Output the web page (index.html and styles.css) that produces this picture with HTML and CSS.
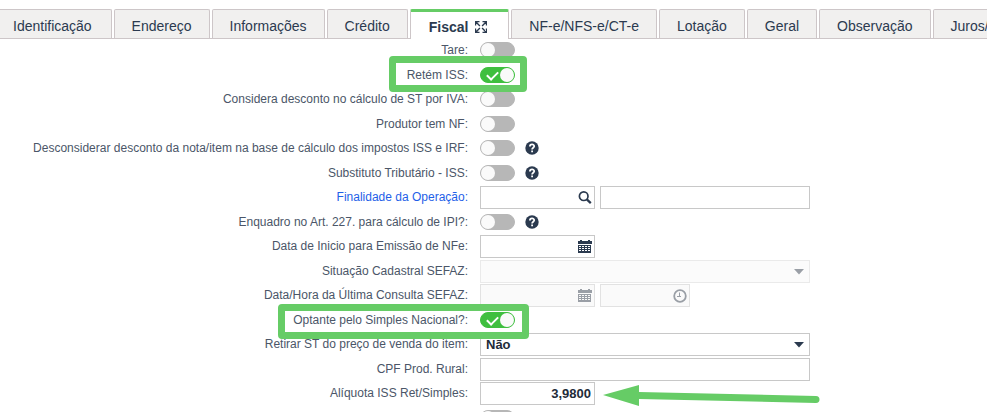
FILE: index.html
```html
<!DOCTYPE html>
<html lang="pt-BR">
<head>
    <meta charset="UTF-8">
    <meta name="viewport" content="width=device-width, initial-scale=1.0">
    <title>Cadastro - Fiscal</title>
    <link rel="stylesheet" href="styles.css">
</head>
<body>
    <svg class="defs" aria-hidden="true">
        <symbol id="lupa" viewBox="0 0 14 14">
            <circle cx="5.7" cy="5.2" r="4.3" fill="none" stroke="currentColor" stroke-width="1.7"/>
            <path d="M8.8 8.4L12.8 12.2" stroke="currentColor" stroke-width="2.3"/>
        </symbol>
        <symbol id="calendario" viewBox="0 0 14 14">
            <path fill="currentColor" fill-rule="evenodd" d="M2 0h2v1h6V0h2v1h2v3H0V1h2zM0 5h13v8H0zM1 6v1h2V6zm3 0v1h2V6zm3 0v1h2V6zm3 0v1h2V6zM1 8v1h2V8zm3 0v1h2V8zm3 0v1h2V8zm3 0v1h2V8zM1 10v1h2v-1zm3 0v1h2v-1zm3 0v1h2v-1zm3 0v1h2v-1z"/>
        </symbol>
        <symbol id="relogio" viewBox="0 0 14 14">
            <circle cx="7" cy="7" r="5.8" fill="none" stroke="currentColor" stroke-width="1.8"/>
            <path d="M6.5 3.5V7.5M4 7.5H8" fill="none" stroke="currentColor" stroke-width="1"/>
        </symbol>
        <symbol id="ajuda" viewBox="0 0 14 14">
            <circle cx="7" cy="7" r="6.7" fill="currentColor"/>
            <path d="M4.9 5.5C4.9 2.8 9.2 2.8 9.2 5.3C9.2 6.7 7.1 6.8 7.1 8.5" fill="none" stroke="#fff" stroke-width="1.8"/>
            <path d="M6.2 9.5h1.8v1.7H6.2z" fill="#fff"/>
        </symbol>
        <symbol id="seta" viewBox="0 0 10 6">
            <path d="M0 0h10L5 5.5z" fill="currentColor"/>
        </symbol>
        <symbol id="expandir" viewBox="0 0 12 12">
            <path d="M4.5 .5h-4v4M7.5 .5h4v4M4.5 11.5h-4v-4M7.5 11.5h4v-4M1 1l3.9 3.9M11 1L7.1 4.9M1 11l3.9-3.9M11 11L7.1 7.1" fill="none" stroke="currentColor" stroke-width="1.4"/>
        </symbol>
    </svg>

    <nav class="abas">
        <button class="aba primeira">Identificação</button>
        <button class="aba">Endereço</button>
        <button class="aba">Informações</button>
        <button class="aba">Crédito</button>
        <button class="aba ativa">Fiscal <svg class="expandir"><use href="#expandir"/></svg></button>
        <button class="aba">NF-e/NFS-e/CT-e</button>
        <button class="aba">Lotação</button>
        <button class="aba">Geral</button>
        <button class="aba">Observação</button>
        <button class="aba">Juros/</button>
    </nav>

    <form class="formulario">
        <div class="linha">
            <label for="tare">Tare:</label>
            <input type="checkbox" class="chave" id="tare">
        </div>
        <div class="linha">
            <label for="retemIss">Retém ISS:</label>
            <input type="checkbox" class="chave" id="retemIss" checked>
            <span class="destaque destaque-iss"></span>
        </div>
        <div class="linha">
            <label for="descontoSt">Considera desconto no cálculo de ST por IVA:</label>
            <input type="checkbox" class="chave" id="descontoSt">
        </div>
        <div class="linha">
            <label for="produtorNf">Produtor tem NF:</label>
            <input type="checkbox" class="chave" id="produtorNf">
        </div>
        <div class="linha">
            <label for="desconsiderar">Desconsiderar desconto da nota/item na base de cálculo dos impostos ISS e IRF:</label>
            <input type="checkbox" class="chave" id="desconsiderar">
            <svg class="ajuda"><use href="#ajuda"/></svg>
        </div>
        <div class="linha">
            <label for="substituto">Substituto Tributário - ISS:</label>
            <input type="checkbox" class="chave" id="substituto">
            <svg class="ajuda"><use href="#ajuda"/></svg>
        </div>
        <div class="linha">
            <label for="finalidade" class="link">Finalidade da Operação:</label>
            <span class="campo medio">
                <input type="text" id="finalidade">
                <svg class="icone"><use href="#lupa"/></svg>
            </span>
            <span class="campo descricao"><input type="text" aria-label="Descrição da finalidade"></span>
        </div>
        <div class="linha">
            <label for="art227">Enquadro no Art. 227. para cálculo de IPI?:</label>
            <input type="checkbox" class="chave" id="art227">
            <svg class="ajuda"><use href="#ajuda"/></svg>
        </div>
        <div class="linha">
            <label for="inicioNfe">Data de Inicio para Emissão de NFe:</label>
            <span class="campo medio">
                <input type="text" id="inicioNfe">
                <svg class="icone"><use href="#calendario"/></svg>
            </span>
        </div>
        <div class="linha">
            <label for="situacao">Situação Cadastral SEFAZ:</label>
            <span class="campo largo">
                <select id="situacao" disabled><option></option></select>
                <svg class="seta"><use href="#seta"/></svg>
            </span>
        </div>
        <div class="linha">
            <label for="consulta">Data/Hora da Última Consulta SEFAZ:</label>
            <span class="campo medio">
                <input type="text" id="consulta" disabled>
                <svg class="icone"><use href="#calendario"/></svg>
            </span>
            <span class="campo hora">
                <input type="text" aria-label="Hora da consulta" disabled>
                <svg class="icone"><use href="#relogio"/></svg>
            </span>
        </div>
        <div class="linha">
            <label for="simples">Optante pelo Simples Nacional?:</label>
            <input type="checkbox" class="chave" id="simples" checked>
            <span class="destaque destaque-simples"></span>
        </div>
        <div class="linha">
            <label for="retirarSt">Retirar ST do preço de venda do item:</label>
            <span class="campo largo">
                <select id="retirarSt"><option>Não</option><option>Sim</option></select>
                <svg class="seta"><use href="#seta"/></svg>
            </span>
        </div>
        <div class="linha">
            <label for="cpfRural">CPF Prod. Rural:</label>
            <span class="campo largo"><input type="text" id="cpfRural"></span>
        </div>
        <div class="linha">
            <label for="aliquota">Alíquota ISS Ret/Simples:</label>
            <span class="campo medio"><input type="text" class="numero" id="aliquota" value="3,9800"></span>
            <svg class="flecha" viewBox="0 0 217 22">
                <path d="M0 10L36 0V7L213 11A3 3 0 0 1 213 18L36 14V21Z" fill="#66cc66"/>
            </svg>
        </div>
        <div class="linha">
            <label></label>
            <input type="checkbox" class="chave" aria-label="Outra opção">
        </div>
    </form>
</body>
</html>
```
FILE: styles.css
```css
* {box-sizing: border-box;}
body {
    margin: 0;
    height: 100vh;
    overflow: hidden;
    background: #fff;
    color: #2b3a4f;
    font-family: "Liberation Sans", Arial, sans-serif;
    font-size: 12px;
}
.defs {display: none;}

/* abas */
.abas {
    display: flex;
    gap: 2px;
    height: 39px;
    padding-top: 9px;
    margin-left: -5px;
    border-bottom: 1px solid #cdc6c8;
    white-space: nowrap;
}
.aba {
    flex: none;
    height: 29px;
    padding: 4px 17px 0;
    border: 1px solid #cdc6c8;
    border-bottom: 0;
    border-radius: 2px 2px 0 0;
    background: #f1f0ef;
    color: #2b3a4f;
    font-family: inherit;
    font-size: 14px;
    line-height: 20px;
}
.aba.primeira {padding-right: 19px;}
.aba.ativa {
    height: 30px;
    padding: 2px 21px 0 18px;
    border-top: 3px solid #66cc66;
    background: #fff;
    font-weight: bold;
}
.expandir {
    width: 12px;
    height: 12px;
    margin-left: 3px;
    vertical-align: -1px;
}

/* formulario */
.linha {
    position: relative;
    display: flex;
    align-items: flex-start;
    height: 24px;
}
.linha:nth-child(odd) {height: 25px;}
.linha label {
    flex: none;
    width: 468px;
    margin-right: 12px;
    color: #4b5668;
    line-height: 22px;
    text-align: right;
    white-space: nowrap;
}
.linha label.link {color: #1f5fe8;}

.chave {
    appearance: none;
    position: relative;
    width: 35px;
    height: 16px;
    margin: 3px 0 0;
    border: 1px solid #b7b7b7;
    border-radius: 8px;
    background: #b7b7b7;
}
.chave::before {
    content: "";
    position: absolute;
    top: 0;
    left: 0;
    width: 14px;
    height: 14px;
    border-radius: 50%;
    background: #fafafa;
}
.chave:checked {
    border-color: #3fbf3f;
    background: #3fbf3f;
}
.chave:checked::before {left: 19px;}
.chave:checked::after {
    content: "";
    position: absolute;
    top: 3px;
    left: 6px;
    width: 9px;
    height: 5px;
    border: solid #fff;
    border-width: 0 0 2px 2px;
    transform: rotate(-45deg);
}
.ajuda {
    width: 14px;
    height: 14px;
    margin: 4px 0 0 10px;
}

.campo {
    position: relative;
    margin-right: 5px;
}
.campo input,
.campo select {
    appearance: none;
    display: block;
    width: 100%;
    height: 23px;
    margin: 0;
    padding: 0 5px;
    border: 1px solid #c8c8c8;
    border-radius: 0;
    background: #fff;
    color: #222b38;
    font-family: inherit;
    font-size: 13px;
    font-weight: bold;
}
.campo input:disabled,
.campo select:disabled {
    border-color: #e2e2e2;
    background: #fafafa;
}
.campo :disabled ~ svg {color: #9a9fa6;}
.campo .numero {
    padding-right: 3px;
    text-align: right;
}
.medio {width: 115px;}
.hora {width: 90px;}
.descricao {width: 210px;}
.largo {width: 330px;}
.icone {
    position: absolute;
    top: 5px;
    right: 3px;
    width: 14px;
    height: 14px;
}
.seta {
    position: absolute;
    top: 9px;
    right: 6px;
    width: 10px;
    height: 6px;
}

/* marcacoes verdes */
.destaque {
    position: absolute;
    z-index: 1;
    border: 7px solid #66cc66;
    border-radius: 4px;
    pointer-events: none;
}
.destaque-iss {
    top: -8px;
    left: 389px;
    width: 138px;
    height: 36px;
}
.destaque-simples {
    top: -5px;
    left: 278px;
    width: 251px;
    height: 35px;
}
.flecha {
    position: absolute;
    top: 3px;
    left: 603px;
    width: 217px;
    height: 22px;
}
```
